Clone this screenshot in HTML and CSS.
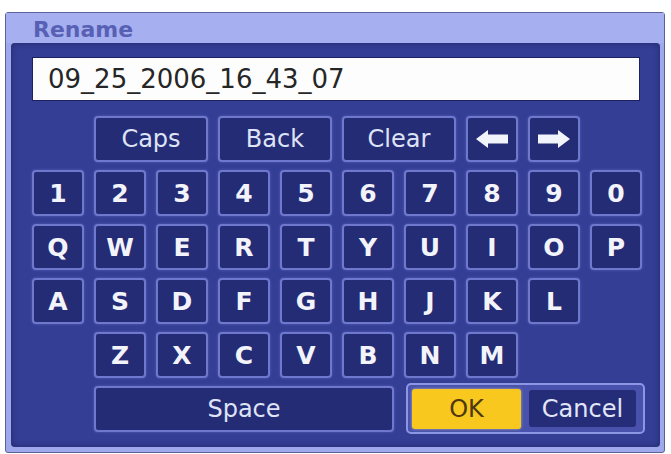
FILE: index.html
```html
<!DOCTYPE html>
<html>
<head>
<meta charset="utf-8">
<link rel="stylesheet" href="styles.css">
</head>
<body>
<div class="dialog">
  <div class="title">Rename</div>
  <div class="panel">
    <div class="field">09_25_2006_16_43_07</div>
    <div class="keys">
      <div class="key word c2 s2">Caps</div>
      <div class="key word s2">Back</div>
      <div class="key word s2">Clear</div>
      <div class="key"><svg width="32" height="18" viewBox="0 0 32 18"><polygon points="0,9 12,0 12,4.5 32,4.5 32,13.5 12,13.5 12,18" fill="#f2f4fb"/></svg></div>
      <div class="key"><svg width="32" height="18" viewBox="0 0 32 18"><polygon points="32,9 20,0 20,4.5 0,4.5 0,13.5 20,13.5 20,18" fill="#f2f4fb"/></svg></div>

      <div class="key c1">1</div><div class="key">2</div><div class="key">3</div><div class="key">4</div><div class="key">5</div>
      <div class="key">6</div><div class="key">7</div><div class="key">8</div><div class="key">9</div><div class="key">0</div>

      <div class="key c1">Q</div><div class="key">W</div><div class="key">E</div><div class="key">R</div><div class="key">T</div>
      <div class="key">Y</div><div class="key">U</div><div class="key">I</div><div class="key">O</div><div class="key">P</div>

      <div class="key c1">A</div><div class="key">S</div><div class="key">D</div><div class="key">F</div><div class="key">G</div>
      <div class="key">H</div><div class="key">J</div><div class="key">K</div><div class="key">L</div>

      <div class="key c2">Z</div><div class="key">X</div><div class="key">C</div><div class="key">V</div><div class="key">B</div>
      <div class="key">N</div><div class="key">M</div>

      <div class="key word c2 s5">Space</div>
      <div class="group">
        <div class="ok">OK</div>
        <div class="cancel">Cancel</div>
      </div>
    </div>
  </div>
</div>
</body>
</html>
```

FILE: styles.css
```css
html, body {
  margin: 0;
  padding: 0;
  background: #ffffff;
}
body {
  padding: 12px 0 0 5px;
  font-family: "DejaVu Sans", "Liberation Sans", sans-serif;
}
.dialog {
  width: 658px;
  height: 439px;
  background: #9ea8ea;
  border: 1px solid #5c6298;
  border-radius: 3px;
  display: flex;
  flex-direction: column;
}
.title {
  height: 30px;
  padding-left: 27px;
  font-size: 22px;
  font-weight: bold;
  color: #5860b4;
  line-height: 34px;
  background: #a6b0f0;
}
.panel {
  flex: 1;
  margin: 0 4px 5px 5px;
  background: #343e95;
  border-radius: 4px;
  padding: 14px 21px 0 21px;
  box-shadow: inset 0 0 6px rgba(20, 25, 80, 0.6);
}
.field {
  height: 44px;
  background: #fdfdfd;
  border: 1px solid #1c2260;
  box-sizing: border-box;
  font-size: 26px;
  line-height: 42px;
  padding-left: 15px;
  color: #262626;
  margin-right: -1px;
}
.keys {
  margin-top: 15px;
  display: grid;
  grid-template-columns: repeat(10, 52px);
  grid-template-rows: repeat(6, 46px);
  column-gap: 10px;
  row-gap: 8px;
}
.key {
  background: #252c76;
  border: 2px solid #6e78cc;
  border-radius: 4px;
  box-sizing: border-box;
  display: flex;
  align-items: center;
  justify-content: center;
  color: #f3f4fb;
  font-weight: bold;
  font-size: 25px;
  box-shadow: 0 0 3px rgba(150, 160, 240, 0.35);
}
.word {
  font-weight: normal;
  font-size: 24px;
  color: #dfe3f6;
}
.c1 { grid-column-start: 1; }
.c2 { grid-column-start: 2; }
.s2 { grid-column-end: span 2; }
.s5 { grid-column-end: span 5; }
.group {
  grid-column: 7 / span 4;
  margin: -3px -3px -2px 2px;
  background: #4852ad;
  border: 2px solid #8c96e4;
  border-radius: 5px;
  display: flex;
  align-items: center;
  padding: 0 7px 0 4px;
  gap: 8px;
}
.ok {
  width: 109px;
  height: 40px;
  background: #f8c81e;
  border-radius: 3px;
  display: flex;
  align-items: center;
  justify-content: center;
  color: #4e3810;
  font-size: 24px;
  box-shadow: 0 0 3px rgba(255, 240, 170, 0.6);
}
.cancel {
  flex: 1;
  height: 37px;
  background: #262d78;
  border-radius: 3px;
  display: flex;
  align-items: center;
  justify-content: center;
  color: #e2e6f8;
  font-size: 24px;
}
```
